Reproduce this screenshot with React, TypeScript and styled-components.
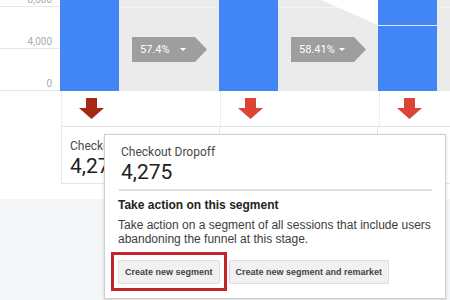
import styled, { createGlobalStyle } from 'styled-components'

const GlobalStyle = createGlobalStyle`
  html, body {
    margin: 0;
    padding: 0;
    background: #ffffff;
    overflow: hidden;
  }
`

const stages = [
  { rate: '57.4%', arrow: '#a52714', triangle: false },
  { rate: '58.41%', arrow: '#db4437', triangle: true },
  { rate: '', arrow: '#db4437', triangle: false, split: true },
]

const Page = styled.div`
  position: relative;
  width: 450px;
  height: 300px;
  overflow: hidden;
  display: flex;
  flex-direction: column;
  font-family: Roboto, 'Liberation Sans', Arial, sans-serif;
`

const Content = styled.div`
  height: 199px;
  flex: none;
  background: #ffffff;
  overflow: hidden;
`

const Footer = styled.div`
  flex: 1;
  background: #f5f6f7;
`

const Chart = styled.div`
  display: flex;
  height: 91px;
  overflow: hidden;
`

const YAxis = styled.div`
  width: 60px;
  flex: none;
  display: flex;
  flex-direction: column;
  justify-content: flex-end;
  overflow: hidden;
`

const Tick = styled.div`
  flex: none;
  height: 42px;
  box-sizing: border-box;
  border-bottom: 1px solid #e6e6e6;
  display: flex;
  align-items: flex-end;
  justify-content: flex-end;
  padding: 0 8px 1px 0;
  font-size: 10px;
  line-height: 10px;
  color: #ababab;
`

const Stage = styled.div`
  display: flex;
  flex: none;
  width: 159px;
`

const Bar = styled.div<{ $split?: boolean }>`
  width: 59px;
  flex: none;
  background: #4285f4;
  ${({ $split }) =>
    $split &&
    `background-image: linear-gradient(#4285f4 25px, #dfe9fb 25px, #dfe9fb 26px, #4285f4 26px);`}
`

const Funnel = styled.div`
  position: relative;
  width: 100px;
  flex: none;
  background: #ebebeb;
  background-image: linear-gradient(transparent 7px, #f3f3f3 7px, #f3f3f3 8px, transparent 8px);
  padding: 37px 0 0 13px;
  box-sizing: border-box;
`

const Cutout = styled.svg`
  position: absolute;
  top: 0;
  right: 0;
`

const Badge = styled.div`
  position: relative;
  width: 75px;
  height: 25px;
  background: #9e9e9e;
  clip-path: polygon(0 0, 63px 0, 100% 50%, 63px 100%, 0 100%);
  display: flex;
  align-items: center;
  padding-left: 8px;
  box-sizing: border-box;
  color: #ffffff;
  font-size: 11px;
`

const Rate = styled.span`
  width: 40px;
`

const Caret = styled.span`
  width: 0;
  height: 0;
  border-left: 3px solid transparent;
  border-right: 3px solid transparent;
  border-top: 3px solid #ffffff;
`

const ArrowRow = styled.div`
  display: flex;
  height: 35px;
  padding-left: 61px;
`

const ArrowCell = styled.div`
  width: 159px;
  flex: none;
  box-sizing: border-box;
  border-left: 1px dotted #dcdcdc;
  padding: 7px 0 0 17px;
`

const CardRow = styled.div`
  display: flex;
  margin-left: 61px;
  border-top: 1px solid #e3e3e3;
`

const Card = styled.div`
  width: 158px;
  height: 57px;
  flex: none;
  box-sizing: border-box;
  border-left: 1px solid #e6e6e6;
  border-bottom: 1px solid #e6e6e6;
  padding: 12px 0 0 8px;
  overflow: hidden;
`

const CardLabel = styled.div`
  font-size: 12px;
  color: #4a4a4a;
  line-height: 15px;
`

const CardValue = styled.div`
  font-size: 21px;
  color: #212121;
  line-height: 24px;
`

const Popup = styled.div`
  position: absolute;
  left: 104px;
  top: 134px;
  width: 342px;
  height: 165px;
  box-sizing: border-box;
  background: #ffffff;
  border: 1px solid #cfcfcf;
  box-shadow: 0 1px 3px rgba(0, 0, 0, 0.15);
`

const PopupHead = styled.div`
  padding: 10px 0 0 2px;
  height: 56px;
  box-sizing: border-box;
  border-bottom: 2px solid #e0e0e0;
  margin: 0 13px 0 14px;
`

const PopupBody = styled.div`
  padding: 7px 13px 0 13px;
  font-family: 'Liberation Sans', Arial, sans-serif;
  color: #3c3c3c;
`

const ActionTitle = styled.div`
  font-size: 12px;
  font-weight: bold;
  color: #222222;
  line-height: 14px;
`

const ActionText = styled.div`
  margin-top: 6px;
  font-size: 12px;
  line-height: 14px;
`

const Actions = styled.div`
  display: flex;
  align-items: center;
  gap: 2px;
  margin: 6px 0 0 -7px;
`

const Highlight = styled.div`
  display: flex;
  padding: 5px 4px 4px 4px;
  border: 3px solid #c4232b;
`

const Button = styled.button`
  height: 24px;
  padding: 0 6px;
  background: #f1f1f1;
  border: 1px solid #dedede;
  border-radius: 2px;
  font-family: 'Liberation Sans', Arial, sans-serif;
  font-size: 9px;
  font-weight: bold;
  color: #444444;
  white-space: nowrap;
`

const DownArrow = ({ color }: { color: string }) => (
  <svg width='25' height='21' viewBox='0 0 25 21'>
    <rect x='7' y='0' width='11' height='11' fill={color} />
    <polygon points='0,10 25,10 12.5,21' fill={color} />
  </svg>
)

export default function App() {
  return (
    <Page>
      <GlobalStyle />
      <Content>
        <Chart>
          <YAxis>
            <Tick>8,000</Tick>
            <Tick>4,000</Tick>
            <Tick>0</Tick>
          </YAxis>
          {stages.map((s, i) => (
            <Stage key={i}>
              <Bar $split={s.split} />
              <Funnel>
                {s.triangle && (
                  <Cutout width='57' height='25' viewBox='0 0 57 25'>
                    <polygon points='0,0 57,0 57,25' fill='#ffffff' />
                  </Cutout>
                )}
                {s.rate && (
                  <Badge>
                    <Rate>{s.rate}</Rate>
                    <Caret />
                  </Badge>
                )}
              </Funnel>
            </Stage>
          ))}
        </Chart>
        <ArrowRow>
          {stages.map((s, i) => (
            <ArrowCell key={i}>
              <DownArrow color={s.arrow} />
            </ArrowCell>
          ))}
        </ArrowRow>
        <CardRow>
          <Card>
            <CardLabel>Checkout Dropoff</CardLabel>
            <CardValue>4,275</CardValue>
          </Card>
          <Card />
          <Card />
        </CardRow>
      </Content>
      <Footer />
      <Popup>
        <PopupHead>
          <CardLabel>Checkout Dropoff</CardLabel>
          <CardValue>4,275</CardValue>
        </PopupHead>
        <PopupBody>
          <ActionTitle>Take action on this segment</ActionTitle>
          <ActionText>
            Take action on a segment of all sessions that include users
            <br />
            abandoning the funnel at this stage.
          </ActionText>
          <Actions>
            <Highlight>
              <Button>Create new segment</Button>
            </Highlight>
            <Button>Create new segment and remarket</Button>
          </Actions>
        </PopupBody>
      </Popup>
    </Page>
  )
}
